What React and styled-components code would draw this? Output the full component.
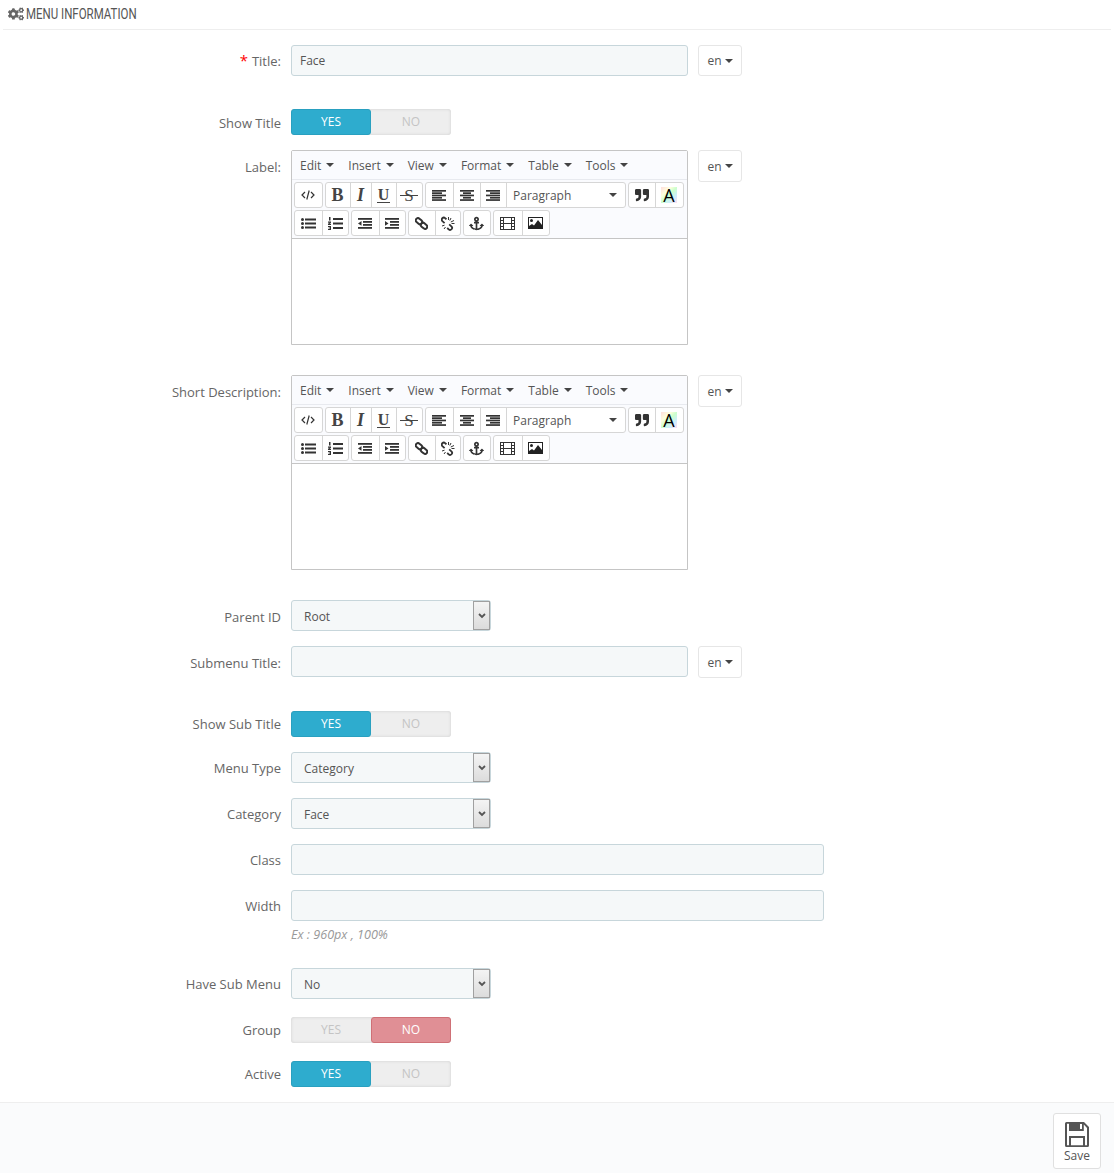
import React from 'react';
import styled, { createGlobalStyle } from 'styled-components';
import { FaCogs, FaAnchor, FaQuoteRight } from 'react-icons/fa';

const GlobalStyle = createGlobalStyle`
  html, body { margin: 0; padding: 0; background: #fff; }
  body { font-family: "Open Sans", "Liberation Sans", sans-serif; font-size: 13px; color: #555; }
`;

const Page = styled.div`
  width: 1114px;
  height: 1174px;
  overflow: hidden;
`;

const Heading = styled.h3`
  margin: 0 3px;
  height: 30px;
  box-sizing: border-box;
  border-bottom: 1px solid #eee;
  display: flex;
  align-items: center;
  gap: 2px;
  padding: 0 0 1px 5px;
  font-family: "Roboto", "Liberation Sans", sans-serif;
  font-weight: 400;
  font-size: 14px;
  color: #555;
`;

const HeadingText = styled.span`
  display: inline-block;
  transform: scaleX(0.82);
  transform-origin: left center;
  white-space: nowrap;
`;

const Form = styled.div`
  padding-top: 15px;
`;

const Row = styled.div`
  display: grid;
  grid-template-columns: 281px auto;
  column-gap: 10px;
  margin-bottom: ${(p) => p.$after ?? 15}px;
`;

const Label = styled.label`
  text-align: right;
  font-size: 13px;
  color: #666;
  line-height: 19px;
  padding-top: ${(p) => p.$top ?? 7}px;
  white-space: nowrap;
`;

const Star = styled.span`
  color: #f00;
  font-size: 15px;
  line-height: 15px;
  margin-right: 4px;
`;

const Field = styled.div`
  display: flex;
  align-items: flex-start;
  gap: 10px;
`;

const TextInput = styled.div`
  box-sizing: border-box;
  width: ${(p) => p.$width}px;
  height: 31px;
  background: #f5f8f9;
  border: 1px solid #c7d6db;
  border-radius: 3px;
  padding: 0 8px;
  line-height: 29px;
  font-size: 12px;
  color: #555;
`;

const LangButton = styled.div`
  box-sizing: border-box;
  width: 44px;
  height: ${(p) => (p.$tall ? 32 : 31)}px;
  border: 1px solid #e6e6e6;
  border-radius: 3px;
  background: #fff;
  display: flex;
  align-items: center;
  justify-content: center;
  gap: 3px;
  font-size: 12px;
  color: #555;
`;

const Caret = styled.span`
  display: inline-block;
  width: 0;
  height: 0;
  border-left: 4px solid transparent;
  border-right: 4px solid transparent;
  border-top: 4px solid #444;
`;

const Switch = styled.div`
  display: flex;
  width: 160px;
  height: 26px;
  border-radius: 3px;
  background: #eee;
  box-shadow: inset 0 0 3px #ccc;
`;

const SwitchSide = styled.div`
  box-sizing: border-box;
  width: 80px;
  text-align: center;
  font-size: 12px;
  line-height: ${(p) => (p.$on ? 24 : 25)}px;
  border-radius: 3px;
  color: ${(p) => (p.$on ? '#fff' : '#c4c4c4')};
  background: ${(p) => (p.$on ? (p.$danger ? '#e08f95' : '#2eacce') : 'transparent')};
  border: ${(p) => (p.$on ? `1px solid ${p.$danger ? '#cf7076' : '#29a0c0'}` : 'none')};
`;

const SelectBox = styled.div`
  box-sizing: border-box;
  width: 200px;
  height: 31px;
  background: #f5f8f9;
  border: 1px solid #c7d6db;
  border-radius: 3px;
  display: flex;
  align-items: stretch;
  justify-content: space-between;
  padding-left: 12px;
  line-height: 31px;
  font-size: 12px;
  color: #555;
`;

const SelectArrow = styled.span`
  box-sizing: border-box;
  width: 17px;
  background: linear-gradient(#f4f4f4, #dcdcdc);
  border: 1px solid #a0a0a0;
  display: flex;
  align-items: center;
  justify-content: center;
`;

const Help = styled.div`
  margin-top: 6px;
  font-size: 12.6px;
  font-style: italic;
  line-height: 16px;
  color: #999;
`;

const Stack = styled.div`
  display: flex;
  flex-direction: column;
`;

const Editor = styled.div`
  box-sizing: border-box;
  width: 397px;
  height: 195px;
  border: 1px solid #c5c5c5;
  border-radius: 2px 2px 0 0;
  display: flex;
  flex-direction: column;
  background: #fff;
`;

const EditorHead = styled.div`
  background: #fafbfe;
  border-bottom: 1px solid #c5c5c5;
  height: 87px;
`;

const MenuBar = styled.div`
  display: flex;
  height: 28px;
  border-bottom: 1px solid #e8eaef;
  padding-left: 8px;
  gap: 14px;
  align-items: center;
`;

const MenuItem = styled.span`
  display: inline-flex;
  align-items: center;
  gap: 5px;
  font-size: 12px;
  color: #555;
`;

const ToolRow = styled.div`
  display: flex;
  gap: 2px;
  padding-left: 2px;
  height: 26px;
  margin-top: 2px;
`;

const ToolGroup = styled.div`
  display: flex;
  height: 26px;
  box-sizing: border-box;
  border: 1px solid #d6d6d6;
  border-radius: 3px;
  background: #fff;
`;

const Tool = styled.div`
  box-sizing: border-box;
  width: ${(p) => p.$width}px;
  padding-right: 1px;
  display: flex;
  align-items: center;
  justify-content: center;
  color: #333;
  font-size: 13px;
  & + & {
    border-left: 1px solid #d6d6d6;
  }
`;

const Letter = styled.span`
  position: relative;
  font-family: "Liberation Serif", serif;
  font-size: ${(p) => p.$size ?? 18}px;
  font-weight: ${(p) => p.$weight ?? 700};
  font-style: ${(p) => (p.$italic ? 'italic' : 'normal')};
  color: #444;
  line-height: 1;
`;

const UnderLetter = styled(Letter)`
  border-bottom: 1.5px solid #444;
  line-height: 14px;
  padding: 0 1px;
`;

const StrikeLetter = styled(Letter)`
  &::after {
    content: "";
    position: absolute;
    left: -4px;
    right: -4px;
    top: 8px;
    height: 1.5px;
    background: #444;
  }
`;

const ColorLetter = styled.span`
  width: 16px;
  height: 16px;
  font-family: "Open Sans", sans-serif;
  font-weight: 400;
  font-size: 18px;
  line-height: 17px;
  text-align: center;
  color: #000;
  background:
    linear-gradient(135deg, #fdd 0, #ffd 30%, #cfc 50%, #cef 75%, #fde 100%);
`;

const ParagraphTool = styled(Tool)`
  justify-content: space-between;
  padding: 0 8px 0 6px;
  font-size: 12px;
  color: #555;
`;

const Footer = styled.div`
  height: 71px;
  border-top: 1px solid #eee;
  background: #fafbfc;
  display: flex;
  justify-content: flex-end;
  padding: 10px 13px 0 0;
  box-sizing: border-box;
`;

const SaveButton = styled.div`
  box-sizing: border-box;
  width: 48px;
  height: 56px;
  border: 1px solid #e0e0e0;
  border-radius: 3px;
  background: #fff;
  display: flex;
  flex-direction: column;
  align-items: center;
  gap: 1px;
  padding-top: 8px;
  line-height: 16px;
  font-size: 12px;
  color: #555;
`;

// toolbar glyph made of horizontal bars, used for the align buttons
const Lines = ({ rows }) => (
  <svg width="14" height="11" viewBox="0 0 14 11">
    {rows.map(([x, w], i) => (
      <rect key={i} x={x} y={i * 2.3} width={w} height="1.7" fill="#333" />
    ))}
  </svg>
);

const CodeIcon = () => (
  <svg width="14" height="12" viewBox="0 0 14 12" fill="none" stroke="#333" strokeWidth="1.2">
    <path d="M4 3 1 6l3 3M10 3l3 3-3 3M8.2 1.5 5.8 10.5" />
  </svg>
);

const BulletList = () => (
  <svg width="15" height="11" viewBox="0 0 15 11" fill="#333">
    <circle cx="1.5" cy="1.5" r="1.5" />
    <circle cx="1.5" cy="5.5" r="1.5" />
    <circle cx="1.5" cy="9.5" r="1.5" />
    <rect x="4" y="0.5" width="11" height="2" />
    <rect x="4" y="4.5" width="11" height="2" />
    <rect x="4" y="8.5" width="11" height="2" />
  </svg>
);

const NumberList = () => (
  <svg width="15" height="13" viewBox="0 0 15 13" fill="#333">
    <rect x="1" y="0" width="1.5" height="3.5" />
    <path d="M0 4.5h3v1.2l-1.6 1H3V8H0V6.8l1.6-1H0z" />
    <path d="M0 9h3v4H0v-1h2v-.5H.6v-1H2V10H0z" />
    <rect x="5" y="1" width="10" height="2" />
    <rect x="5" y="5.5" width="10" height="2" />
    <rect x="5" y="10" width="10" height="2" />
  </svg>
);

const Indent = ({ flip }) => (
  <svg width="14" height="11" viewBox="0 0 14 11" fill="#333">
    <rect x="0" y="0" width="14" height="1.8" />
    <rect x="5" y="3" width="9" height="1.8" />
    <rect x="5" y="6" width="9" height="1.8" />
    <rect x="0" y="9" width="14" height="1.8" />
    <path d={flip ? 'M0 3 3.5 5.4 0 7.8z' : 'M3.5 3 0 5.4l3.5 2.4z'} />
  </svg>
);

const LinkIcon = () => (
  <svg width="13" height="13" viewBox="0 0 13 13" fill="none" stroke="#333" strokeWidth="2">
    <rect x="0.5" y="2" width="7" height="4.4" rx="2.2" transform="rotate(40 4 4.2)" />
    <rect x="5.5" y="6.6" width="7" height="4.4" rx="2.2" transform="rotate(40 9 8.8)" />
  </svg>
);

const UnlinkIcon = () => (
  <svg width="14" height="15" viewBox="0 0 14 15" fill="none" stroke="#333">
    <path strokeWidth="1.8" d="M5.5 3.2 4.2 2.2a2 2 0 0 0-2.8 2.9l2.2 2M8.2 8.4l2.2 2a2 2 0 0 1-2.7 3L6.2 12" />
    <path strokeWidth="1" d="M7.5 1v3M10 2 8.8 4.5M13 4.5 9.8 6M13.5 7.5h-3M1 10l2.5-.8M3 13l1.5-2" />
  </svg>
);

const FilmIcon = () => (
  <svg width="15" height="13" viewBox="0 0 15 13" fill="none" stroke="#333">
    <rect x="0.5" y="0.5" width="14" height="12" />
    <path d="M3.5 0.5v12M11.5 0.5v12M0.5 6.5h14M0.5 3.5h3M0.5 9.5h3M11.5 3.5h3M11.5 9.5h3" />
  </svg>
);

const ImageIcon = () => (
  <svg width="15" height="12" viewBox="0 0 15 12">
    <rect x="0.5" y="0.5" width="14" height="11" fill="#fff" stroke="#222" />
    <circle cx="3.5" cy="3.5" r="1.5" fill="#222" />
    <path d="M1 11V9l3-2 2 1.5L10 3l4 5v3z" fill="#222" />
  </svg>
);

const SaveIcon = () => (
  <svg width="24" height="25" viewBox="0 0 24 25">
    <path
      fillRule="evenodd"
      fill="#555"
      d="M1.5 0H19l5 5v18.5a1.5 1.5 0 0 1-1.5 1.5h-21A1.5 1.5 0 0 1 0 23.5v-22A1.5 1.5 0 0 1 1.5 0zM4 1.8H2v21.4h2V14h16v9.2h2V6l-3.2-3.4V9H4zM15 2h2v5h-2zM6 16v7.2h12V16z"
    />
  </svg>
);

const Toolbar = () => (
  <EditorHead>
    <MenuBar>
      {['Edit', 'Insert', 'View', 'Format', 'Table', 'Tools'].map((m) => (
        <MenuItem key={m}>{m}<Caret /></MenuItem>
      ))}
    </MenuBar>
    <ToolRow>
      <ToolGroup><Tool $width={27}><CodeIcon /></Tool></ToolGroup>
      <ToolGroup>
        <Tool $width={24}><Letter>B</Letter></Tool>
        <Tool $width={21}><Letter $italic>I</Letter></Tool>
        <Tool $width={25}><UnderLetter $size={16}>U</UnderLetter></Tool>
        <Tool $width={26}><StrikeLetter $size={17} $weight={400}>S</StrikeLetter></Tool>
      </ToolGroup>
      <ToolGroup>
        <Tool $width={27}><Lines rows={[[0, 14], [0, 10], [0, 14], [0, 10], [0, 14]]} /></Tool>
        <Tool $width={27}><Lines rows={[[0, 14], [3, 8], [0, 14], [3, 8], [0, 14]]} /></Tool>
        <Tool $width={26}><Lines rows={[[0, 14], [4, 10], [0, 14], [4, 10], [0, 14]]} /></Tool>
        <ParagraphTool $width={119}>Paragraph<Caret /></ParagraphTool>
      </ToolGroup>
      <ToolGroup>
        <Tool $width={26}><FaQuoteRight size={14} /></Tool>
        <Tool $width={28}><ColorLetter>A</ColorLetter></Tool>
      </ToolGroup>
    </ToolRow>
    <ToolRow>
      <ToolGroup>
        <Tool $width={27}><BulletList /></Tool>
        <Tool $width={26}><NumberList /></Tool>
      </ToolGroup>
      <ToolGroup>
        <Tool $width={27}><Indent /></Tool>
        <Tool $width={26}><Indent flip /></Tool>
      </ToolGroup>
      <ToolGroup>
        <Tool $width={26}><LinkIcon /></Tool>
        <Tool $width={25}><UnlinkIcon /></Tool>
      </ToolGroup>
      <ToolGroup>
        <Tool $width={26}><FaAnchor size={15} /></Tool>
      </ToolGroup>
      <ToolGroup>
        <Tool $width={28}><FilmIcon /></Tool>
        <Tool $width={27}><ImageIcon /></Tool>
      </ToolGroup>
    </ToolRow>
  </EditorHead>
);

const Lang = ({ tall }) => <LangButton $tall={tall}>en<Caret /></LangButton>;

const YesNo = ({ no }) => (
  <Switch>
    <SwitchSide $on={!no}>YES</SwitchSide>
    <SwitchSide $on={no} $danger={no}>NO</SwitchSide>
  </Switch>
);

const Select = ({ value }) => (
  <SelectBox>
    {value}
    <SelectArrow>
      <svg width="8" height="6" viewBox="0 0 8 6" fill="none" stroke="#555" strokeWidth="1.8">
        <path d="M1 1l3 3 3-3" />
      </svg>
    </SelectArrow>
  </SelectBox>
);

export default function App() {
  return (
    <Page>
      <GlobalStyle />
      <Heading><FaCogs size={16} color="#666" /><HeadingText>MENU INFORMATION</HeadingText></Heading>
      <Form>
        <Row $after={33}>
          <Label><Star>*</Star>Title:</Label>
          <Field><TextInput $width={397}>Face</TextInput><Lang /></Field>
        </Row>
        <Row>
          <Label $top={5}>Show Title</Label>
          <YesNo />
        </Row>
        <Row $after={30}>
          <Label $top={8}>Label:</Label>
          <Field><Editor><Toolbar /></Editor><Lang tall /></Field>
        </Row>
        <Row $after={30}>
          <Label $top={8}>Short Description:</Label>
          <Field><Editor><Toolbar /></Editor><Lang tall /></Field>
        </Row>
        <Row>
          <Label $top={8}>Parent ID</Label>
          <Select value="Root" />
        </Row>
        <Row $after={33}>
          <Label $top={8}>Submenu Title:</Label>
          <Field><TextInput $width={397} /><Lang tall /></Field>
        </Row>
        <Row>
          <Label $top={4}>Show Sub Title</Label>
          <YesNo />
        </Row>
        <Row>
          <Label>Menu Type</Label>
          <Select value="Category" />
        </Row>
        <Row>
          <Label>Category</Label>
          <Select value="Face" />
        </Row>
        <Row>
          <Label>Class</Label>
          <TextInput $width={533} />
        </Row>
        <Row $after={25}>
          <Label>Width</Label>
          <Stack>
            <TextInput $width={533} />
            <Help>Ex : 960px , 100%</Help>
          </Stack>
        </Row>
        <Row $after={18}>
          <Label>Have Sub Menu</Label>
          <Select value="No" />
        </Row>
        <Row $after={18}>
          <Label $top={4}>Group</Label>
          <YesNo no />
        </Row>
        <Row>
          <Label $top={4}>Active</Label>
          <YesNo />
        </Row>
      </Form>
      <Footer>
        <SaveButton><SaveIcon />Save</SaveButton>
      </Footer>
    </Page>
  );
}
